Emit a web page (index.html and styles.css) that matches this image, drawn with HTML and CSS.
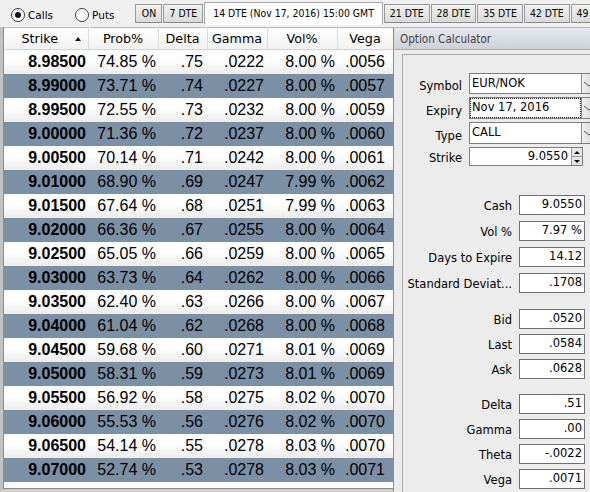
FILE: index.html
```html
<!DOCTYPE html>
<html>
<head>
<meta charset="utf-8">
<link rel="stylesheet" href="styles.css">
</head>
<body>
<div class="app">
  <header class="topbar">
    <div class="radios">
      <label class="radio checked"><span class="dot"></span>Calls</label>
      <label class="radio"><span class="dot"></span>Puts</label>
    </div>
    <nav class="tabs">
      <span class="tab tab-on">ON</span>
      <span class="tab">7 DTE</span>
      <span class="tab active">14 DTE (Nov 17, 2016) 15:00 GMT</span>
      <span class="tab">21 DTE</span>
      <span class="tab">28 DTE</span>
      <span class="tab">35 DTE</span>
      <span class="tab">42 DTE</span>
      <span class="tab">49 DTE</span>
    </nav>
  </header>
  <main class="main">
    <section class="chain">
      <div class="chain-inner">
        <table class="grid">
          <colgroup>
            <col class="c-strike"><col class="c-prob"><col class="c-delta"><col class="c-gamma"><col class="c-vol"><col class="c-vega">
          </colgroup>
          <thead>
            <tr>
              <th class="h-strike">Strike<span class="sort"></span></th>
              <th>Prob%</th>
              <th>Delta</th>
              <th>Gamma</th>
              <th>Vol%</th>
              <th>Vega</th>
            </tr>
          </thead>
          <tbody>
            <tr><td class="strike">8.98500</td><td>74.85 %</td><td>.75</td><td>.0222</td><td>8.00 %</td><td>.0056</td></tr>
            <tr><td class="strike">8.99000</td><td>73.71 %</td><td>.74</td><td>.0227</td><td>8.00 %</td><td>.0057</td></tr>
            <tr><td class="strike">8.99500</td><td>72.55 %</td><td>.73</td><td>.0232</td><td>8.00 %</td><td>.0059</td></tr>
            <tr><td class="strike">9.00000</td><td>71.36 %</td><td>.72</td><td>.0237</td><td>8.00 %</td><td>.0060</td></tr>
            <tr><td class="strike">9.00500</td><td>70.14 %</td><td>.71</td><td>.0242</td><td>8.00 %</td><td>.0061</td></tr>
            <tr><td class="strike">9.01000</td><td>68.90 %</td><td>.69</td><td>.0247</td><td>7.99 %</td><td>.0062</td></tr>
            <tr><td class="strike">9.01500</td><td>67.64 %</td><td>.68</td><td>.0251</td><td>7.99 %</td><td>.0063</td></tr>
            <tr><td class="strike">9.02000</td><td>66.36 %</td><td>.67</td><td>.0255</td><td>8.00 %</td><td>.0064</td></tr>
            <tr><td class="strike">9.02500</td><td>65.05 %</td><td>.66</td><td>.0259</td><td>8.00 %</td><td>.0065</td></tr>
            <tr><td class="strike">9.03000</td><td>63.73 %</td><td>.64</td><td>.0262</td><td>8.00 %</td><td>.0066</td></tr>
            <tr><td class="strike">9.03500</td><td>62.40 %</td><td>.63</td><td>.0266</td><td>8.00 %</td><td>.0067</td></tr>
            <tr><td class="strike">9.04000</td><td>61.04 %</td><td>.62</td><td>.0268</td><td>8.00 %</td><td>.0068</td></tr>
            <tr><td class="strike">9.04500</td><td>59.68 %</td><td>.60</td><td>.0271</td><td>8.01 %</td><td>.0069</td></tr>
            <tr><td class="strike">9.05000</td><td>58.31 %</td><td>.59</td><td>.0273</td><td>8.01 %</td><td>.0069</td></tr>
            <tr><td class="strike">9.05500</td><td>56.92 %</td><td>.58</td><td>.0275</td><td>8.02 %</td><td>.0070</td></tr>
            <tr><td class="strike">9.06000</td><td>55.53 %</td><td>.56</td><td>.0276</td><td>8.02 %</td><td>.0070</td></tr>
            <tr><td class="strike">9.06500</td><td>54.14 %</td><td>.55</td><td>.0278</td><td>8.03 %</td><td>.0070</td></tr>
            <tr><td class="strike">9.07000</td><td>52.74 %</td><td>.53</td><td>.0278</td><td>8.03 %</td><td>.0071</td></tr>
          </tbody>
        </table>
      </div>
    </section>
    <section class="calc">
      <div class="calc-title">Option Calculator</div>
      <div class="calc-body">
        <div class="calc-panel">
          <div class="form form-input">
            <span class="lbl">Symbol</span>
            <div class="combo"><span class="combo-text">EUR/NOK</span><span class="combo-btn"><svg width="12" height="8" viewBox="0 0 12 8"><polyline points="1,2 6,6 11,2" fill="none" stroke="#555" stroke-width="1"/></svg></span></div>
            <span class="lbl">Expiry</span>
            <div class="combo"><span class="combo-text focused">Nov 17, 2016</span><span class="combo-btn"><svg width="12" height="8" viewBox="0 0 12 8"><polyline points="1,2 6,6 11,2" fill="none" stroke="#555" stroke-width="1"/></svg></span></div>
            <span class="lbl">Type</span>
            <div class="combo"><span class="combo-text">CALL</span><span class="combo-btn"><svg width="12" height="8" viewBox="0 0 12 8"><polyline points="1,2 6,6 11,2" fill="none" stroke="#555" stroke-width="1"/></svg></span></div>
            <span class="lbl">Strike</span>
            <div class="spinner"><span class="spin-text">9.0550</span><span class="spin-btns"><span class="spin-up"></span><span class="spin-down"></span></span></div>
          </div>
          <div class="form form-out sec-a">
            <span class="lbl">Cash</span><span class="field">9.0550</span>
            <span class="lbl">Vol %</span><span class="field">7.97 %</span>
            <span class="lbl">Days to Expire</span><span class="field">14.12</span>
            <span class="lbl">Standard Deviat...</span><span class="field">.1708</span>
          </div>
          <div class="form form-out sec-b">
            <span class="lbl">Bid</span><span class="field">.0520</span>
            <span class="lbl">Last</span><span class="field">.0584</span>
            <span class="lbl">Ask</span><span class="field">.0628</span>
          </div>
          <div class="form form-out sec-c">
            <span class="lbl">Delta</span><span class="field">.51</span>
            <span class="lbl">Gamma</span><span class="field">.00</span>
            <span class="lbl">Theta</span><span class="field">-.0022</span>
            <span class="lbl">Vega</span><span class="field">.0071</span>
          </div>
        </div>
      </div>
    </section>
  </main>
</div>
</body>
</html>
```
FILE: styles.css
```css
* { box-sizing: border-box; }
html, body { margin: 0; padding: 0; }
body {
  width: 590px;
  height: 492px;
  overflow: hidden;
  background: #f0f0f0;
  font-family: "DejaVu Sans", sans-serif;
  color: #000;
}
.app { width: 590px; height: 492px; display: flex; flex-direction: column; }

/* top bar */
.topbar {
  height: 27px;
  flex: none;
  display: flex;
  align-items: stretch;
  white-space: nowrap;
  background: #f0f0f0;
}
.radios {
  display: flex;
  align-items: center;
  gap: 22px;
  padding-left: 11px;
  padding-top: 2px;
  margin-right: 21px;
  font-size: 10.5px;
}
.radio { display: flex; align-items: center; gap: 3px; }
.dot {
  width: 14px; height: 14px;
  border-radius: 50%;
  border: 1px solid #3c3c3c;
  background: #fff;
  display: inline-flex;
  align-items: center;
  justify-content: center;
}
.radio.checked .dot::after {
  content: "";
  width: 6px; height: 6px;
  border-radius: 50%;
  background: #111;
}
.tabs {
  display: flex;
  align-items: flex-end;
  padding-bottom: 4px;
  flex: none;
  font-family: "DejaVu Sans Condensed", "DejaVu Sans", sans-serif;
  font-stretch: condensed;
  font-size: 10.4px;
}
.tab {
  height: 19px;
  line-height: 17px;
  padding: 0 5px;
  margin-right: 1px;
  border: 1px solid #9a9a9a;
  border-bottom-color: #8a8a8a;
  background: linear-gradient(#f2f2f2, #dadada);
  text-align: center;
}
.tab-on { min-width: 27px; }
.tab.active {
  height: 23px;
  line-height: 21px;
  margin-bottom: -2px;
  padding: 0 8px;
  background: #fff;
  border-color: #a8a8a8;
  border-bottom-color: #fff;
}

/* main */
.main { flex: 1; display: flex; min-height: 0; }

.chain {
  width: 393px;
  flex: none;
  border-left: 3px solid #c2c2c2;
  border-bottom: 3px solid #cfcfcf;
  background: #fff;
}
.chain-inner {
  height: 100%;
  border-left: 1px solid #8a8a8a;
  border-bottom: 1px solid #8a8a8a;
  background: #fbfbfb;
}
.grid {
  border-collapse: collapse;
  table-layout: fixed;
  width: 389px;
}
.c-strike { width: 84px; }
.c-prob { width: 70px; }
.c-delta { width: 49px; }
.c-gamma { width: 60px; }
.c-vol { width: 70px; }
.c-vega { width: 56px; }

.grid th {
  height: 22px;
  padding: 0;
  font-weight: normal;
  font-size: 12.7px;
  text-align: center;
  background: linear-gradient(#ffffff, #f1f1f1);
  border-top: 1px solid #b8b8b8;
  border-bottom: 1px solid #d6d6d6;
  border-right: 1px solid #dcdcdc;
}
.grid th.h-strike { position: relative; padding-right: 12px; }
.sort {
  position: absolute;
  right: 7px;
  top: 9px;
  width: 0; height: 0;
  border-left: 3px solid transparent;
  border-right: 3px solid transparent;
  border-bottom: 4px solid #111;
}
.grid td {
  height: 24px;
  padding: 0 2px 0 0;
  text-align: right;
  font-family: "Liberation Sans", Arial, sans-serif;
  font-size: 16px;
  white-space: nowrap;
}
.grid td:nth-child(3) { padding-right: 4px; }
.grid td:nth-child(4) { padding-right: 3px; }
.grid td:last-child { padding-right: 8px; }
.grid td.strike { font-weight: bold; }
.grid tbody tr:nth-child(odd) td { background: linear-gradient(#ffffff 40%, #ececec); }
.grid tbody tr:nth-child(even) td { background: #7b8fa5; }

/* calculator */
.calc {
  flex: 1;
  min-width: 0;
  overflow: hidden;
  display: flex;
  flex-direction: column;
  border-left: 1px solid #8c8c8c;
  box-shadow: inset 1px 0 #d8d8d8;
  background: #ececec;
}
.calc-title {
  height: 23px;
  margin-left: 1px;
  flex: none;
  padding-left: 5px;
  line-height: 22px;
  font-family: "DejaVu Sans Condensed", "DejaVu Sans", sans-serif;
  font-stretch: condensed;
  font-size: 11.6px;
  color: #3f3f3f;
  background: linear-gradient(#e6e9ee, #ccd1d9);
  border-top: 1px solid #b0b4ba;
  border-bottom: 1px solid #a6a9ae;
}
.calc-body {
  flex: 1;
  padding: 4px 0 0 8px;
  background: #ececec;
  min-height: 0;
}
.calc-panel {
  height: 100%;
  border-left: 1px solid #a6a6a6;
  border-top: 1px solid #a6a6a6;
  background: #ececec;
  padding-top: 18px;
  font-size: 11.5px;
  white-space: nowrap;
}
.form { display: grid; column-gap: 7px; }
.form-input {
  grid-template-columns: 59px 127px;
  grid-template-rows: 21px 22px 22px 19px;
  row-gap: 3px;
}
.lbl { text-align: right; align-self: end; line-height: 14px; padding-bottom: 1px; }
.combo {
  display: flex;
  border: 1px solid #7d7d7d;
  background: #fff;
  width: 127px;
}
.combo-text {
  flex: 1;
  padding-left: 2px;
  line-height: 14px;
  padding-top: 2px;
}
.combo-text.focused {
  margin: 1px;
  padding-left: 1px;
  padding-top: 1px;
  outline: 1px dotted #222;
}
.combo-btn {
  width: 14px;
  flex: none;
  border-left: 1px solid #8a8a8a;
  background: linear-gradient(90deg, #f0f0f0, #d6d6d6);
  display: flex;
  align-items: center;
  justify-content: center;
}
.spinner {
  display: flex;
  width: 114px;
  border: 1px solid #7d7d7d;
  background: #fff;
}
.spin-text { flex: 1; text-align: right; padding-right: 3px; line-height: 16px; }
.spin-btns {
  width: 11px;
  display: flex;
  flex-direction: column;
  border-left: 1px solid #9a9a9a;
}
.spin-up, .spin-down {
  flex: 1;
  background: #e6e6e6;
  display: flex;
  align-items: center;
  justify-content: center;
}
.spin-up { border-bottom: 1px solid #9a9a9a; }
.spin-up::after {
  content: "";
  border-left: 3px solid transparent;
  border-right: 3px solid transparent;
  border-bottom: 3px solid #111;
}
.spin-down::after {
  content: "";
  border-left: 3px solid transparent;
  border-right: 3px solid transparent;
  border-top: 3px solid #111;
}

.form-out { grid-template-columns: 109px 66px; }
.form-out .lbl { padding-bottom: 2px; }
.sec-a { margin-top: 29px; grid-auto-rows: 20px; row-gap: 6px; }
.sec-b { margin-top: 16px; grid-auto-rows: 20px; row-gap: 5px; }
.sec-c { margin-top: 15px; grid-auto-rows: 20px; row-gap: 5px; }
.field {
  height: 20px;
  border: 1px solid #6f6f6f;
  background: #fff;
  text-align: right;
  padding-right: 2px;
  line-height: 17px;
}
```
